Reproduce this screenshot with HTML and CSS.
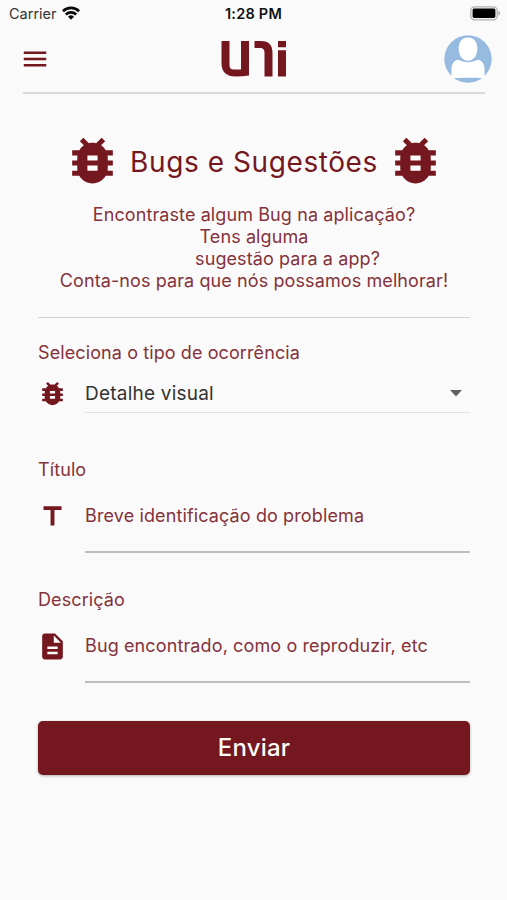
FILE: index.html
```html
<!DOCTYPE html>
<html lang="pt">
<head>
<meta charset="utf-8">
<title>Bugs e Sugestões</title>
<link rel="stylesheet" href="styles.css">
</head>
<body>
<svg class="defs" width="0" height="0" aria-hidden="true">
  <symbol id="bug" viewBox="0 0 24 24"><path d="M20 8h-2.81c-.45-.78-1.07-1.45-1.82-1.96L17 4.41 15.59 3l-2.17 2.17C12.96 5.06 12.49 5 12 5c-.49 0-.96.06-1.41.17L8.41 3 7 4.41l1.62 1.63C7.88 6.55 7.26 7.22 6.81 8H4v2h2.09c-.05.33-.09.66-.09 1v1H4v2h2v1c0 .34.04.67.09 1H4v2h2.81c1.04 1.79 2.97 3 5.19 3s4.15-1.21 5.19-3H20v-2h-2.09c.05-.33.09-.66.09-1v-1h2v-2h-2v-1c0-.34-.04-.67-.09-1H20V8zm-6 8h-4v-2h4v2zm0-4h-4v-2h4v2z"/></symbol>
</svg>
<div class="status">
  <div class="carrier"><span class="carrier-name">Carrier</span>
    <svg class="wifi" viewBox="0 0 18 14"><g fill="none" stroke="#0a0a0a" stroke-width="2.700"><path d="M.9 5.200a11.600 11.600 0 0 1 16.200 0"/><path d="M3.800 8.500a7.500 7.500 0 0 1 10.400 0"/></g><path fill="#0a0a0a" d="M9 13.800l-3-3.100a4.300 4.300 0 0 1 6 0z"/></svg>
  </div>
  <div class="clock">1:28 PM</div>
  <div class="battery">
    <svg viewBox="0 0 31 15" width="31" height="15"><rect x=".8" y=".8" width="26.4" height="13" rx="3.8" fill="#f4f4f4" stroke="#b3b3b3" stroke-width="1.3"/><rect x="2.6" y="2.6" width="22.8" height="9.4" rx="1.8" fill="#000"/><path d="M28.400 4.800c2.200.8 2.200 4.200 0 5z" fill="#a5a5a5"/></svg>
  </div>
</div>
<header class="topbar">
  <svg class="menu" viewBox="0 0 24 24"><path d="M3 18h18v-2H3v2zm0-5h18v-2H3v2zm0-7v2h18V6H3z"/></svg>
  <svg class="logo" viewBox="0 0 66 36"><path d="M.5 0h8v24q0 4.500 4 4.500h7.500V0h8v34.500q-6 1-13.500 1C5.500 35.500.500 31 .500 22zM33.500 0h6.500C48 0 51.500 4 51.500 12v23.500h-8V12c0-3.500-1.200-5-4.500-5h-5.500zM57 0h8v6.300h-8zM57 9.300h8v26.200h-8z"/></svg>
  <svg class="avatar" viewBox="0 0 48 48"><circle cx="24" cy="24" r="23.700" fill="#97bbe0"/><path fill="#fff" d="M24 2.500c6 0 9.300 4.500 9.300 11S30 25.800 24 25.800 14.700 20 14.700 13.500 18 2.500 24 2.500zM14.500 24.800c5 3.200 14 3.200 19 0 4.500.5 7 4 7 9.500v9c-8-.8-25-.8-33 0v-9c0-5.500 2.500-9 7-9.500z"/></svg>
</header>
<main class="page">
  <div class="heading">
    <svg class="bug-lg"><use href="#bug"/></svg>
    <h1>Bugs e Sugestões</h1>
    <svg class="bug-lg"><use href="#bug"/></svg>
  </div>
  <div class="intro">
    <div class="l1">Encontraste algum Bug na aplicação?</div>
    <div class="l2">Tens alguma</div>
    <div class="l3">sugestão para a app?</div>
    <div class="l4">Conta-nos para que nós possamos melhorar!</div>
  </div>
  <section class="field type">
    <div class="label">Seleciona o tipo de ocorrência</div>
    <div class="row">
      <svg class="icon"><use href="#bug"/></svg>
      <div class="select"><span>Detalhe visual</span>
        <svg class="caret" viewBox="0 0 12 7"><path d="M0 0h12L6 6.500z"/></svg>
      </div>
    </div>
  </section>
  <section class="field subject">
    <div class="label">Título</div>
    <div class="row">
      <svg class="icon" viewBox="0 0 24 24"><path d="M5 4v3h5.500v12h3V7H19V4z"/></svg>
      <div class="input">Breve identificação do problema</div>
    </div>
  </section>
  <section class="field details">
    <div class="label">Descrição</div>
    <div class="row">
      <svg class="icon" viewBox="0 0 24 24"><path d="M14 2H6c-1.100 0-1.990.9-1.990 2L4 20c0 1.100.890 2 1.990 2H18c1.100 0 2-.9 2-2V8l-6-6zm2 16H8v-2h8v2zm0-4H8v-2h8v2zm-3-5V3.500L18.500 9H13z"/></svg>
      <div class="input">Bug encontrado, como o reproduzir, etc</div>
    </div>
  </section>
  <button class="send">Enviar</button>
</main>
</body>
</html>
```

FILE: styles.css
```css
* { box-sizing: border-box; }
body {
  margin: 0;
  height: 900px;
  background: #fafafa;
  color: #84323b;
  font: 18px/22px Inter, "Liberation Sans", sans-serif;
  letter-spacing: .1px;
  overflow: hidden;
}
svg { display: block; fill: #75171e; flex: none; }
.defs { position: absolute; }
.status {
  display: grid;
  grid-template-columns: 1fr auto 1fr;
  align-items: center;
  height: 28px;
  padding: 0 6px 0 9px;
  color: #111;
}
.carrier { display: flex; align-items: center; gap: 5px; font-size: 14.5px; letter-spacing: 0; color: #333; }
.wifi { width: 18px; height: 14px; margin-bottom: 2px; }
.clock { margin-right: 3px; font-size: 14.5px; font-weight: 600; letter-spacing: .25px; }
.battery { display: flex; justify-content: flex-end; padding-bottom: 1px; }
.topbar {
  display: flex;
  justify-content: space-between;
  align-items: center;
  height: 66px;
  margin: 0 22px 0 23px;
  padding-bottom: 3px;
  border-bottom: 2px solid #d9d9d9;
}
.menu { width: 30px; height: 30px; margin-left: -3px; }
.logo { width: 66px; height: 36px; margin-left: 13px; }
.avatar { width: 48px; height: 48px; margin-right: -7px; }
.page { padding: 0 37px 0 38px; }
.heading {
  display: flex;
  align-items: center;
  justify-content: space-between;
  width: 384px;
  height: 61px;
  margin: 37px 0 0 24px;
}
.bug-lg { width: 61px; height: 61px; }
.heading .bug-lg { margin-top: -2px; }
h1 { margin: 0; font-size: 28px; line-height: 34px; font-weight: 400; color: #75171e; letter-spacing: .58px; white-space: nowrap; }
.intro {
  margin-top: 12px;
  padding-bottom: 25px;
  border-bottom: 1px solid #d3d3d3;
  text-align: center;
  white-space: nowrap;
}
.l3 { padding-left: 67px; }
.row { display: flex; align-items: flex-start; margin-top: 23px; }
.icon { width: 31px; height: 31px; margin: -3px 17px 0 -1px; }
.type { margin-top: 24px; }
.type .row { margin-top: 14px; }
.type .icon { margin-top: -.5px; }
.select {
  display: flex;
  flex: 1;
  align-items: center;
  justify-content: space-between;
  height: 35px;
  padding: 0 8px 3px 0;
  border-bottom: 1px solid #e3e3e3;
  color: #333;
  font-size: 19px;
  letter-spacing: .22px;
}
.caret { width: 12px; height: 7px; fill: #616161; }
.input { flex: 1; height: 49px; padding-top: 1px; border-bottom: 2px solid #bdbdbd; letter-spacing: .12px; white-space: nowrap; }
.subject { margin-top: 46px; }
.details { margin-top: 36px; }
.send {
  display: block;
  width: 432px;
  height: 54px;
  margin-top: 38px;
  border: 0;
  border-radius: 5px;
  background: #75171e;
  color: #fafafa;
  font: 500 24px/30px Inter, sans-serif;
  letter-spacing: .2px;
  box-shadow: 0 1px 3px rgba(0, 0, 0, .3);
}
```
